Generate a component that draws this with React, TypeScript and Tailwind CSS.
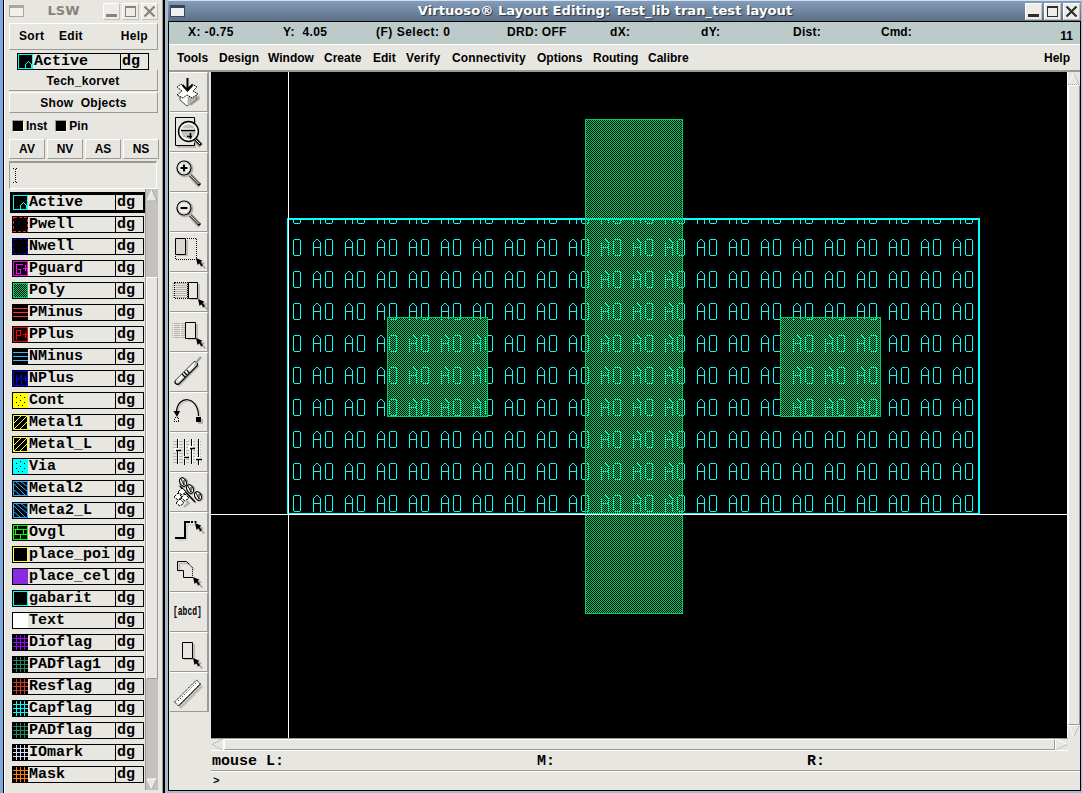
import React from "react";

type Layer = { name: string; kind: string; color: string };

const layers: Layer[] = [
  { name: "Active", kind: "active", color: "#00ffff" },
  { name: "Pwell", kind: "dash", color: "#ff2020" },
  { name: "Nwell", kind: "dash", color: "#0000ff" },
  { name: "Pguard", kind: "guard", color: "#ff00ff" },
  { name: "Poly", kind: "check", color: "#00cc66" },
  { name: "PMinus", kind: "lines", color: "#ff3030" },
  { name: "PPlus", kind: "pplus", color: "#ff0000" },
  { name: "NMinus", kind: "lines", color: "#33bbff" },
  { name: "NPlus", kind: "nplus", color: "#0000ff" },
  { name: "Cont", kind: "dots", color: "#ffff00" },
  { name: "Metal1", kind: "up", color: "#ffff33" },
  { name: "Metal_L", kind: "up", color: "#ffff33" },
  { name: "Via", kind: "dots", color: "#00ffff" },
  { name: "Metal2", kind: "down", color: "#33aaff" },
  { name: "Meta2_L", kind: "down", color: "#33aaff" },
  { name: "Ovgl", kind: "brick", color: "#00ff00" },
  { name: "place_poi", kind: "frame", color: "#ffff33" },
  { name: "place_cel", kind: "solid", color: "#8a2be2" },
  { name: "gabarit", kind: "frame", color: "#00ffff" },
  { name: "Text", kind: "solid", color: "#ffffff" },
  { name: "Dioflag", kind: "grid", color: "#9900ff" },
  { name: "PADflag1", kind: "grid", color: "#228866" },
  { name: "Resflag", kind: "grid", color: "#cc3c22" },
  { name: "Capflag", kind: "grid", color: "#00ffff" },
  { name: "PADflag", kind: "grid", color: "#228866" },
  { name: "IOmark", kind: "grid", color: "#d8dcff" },
  { name: "Mask", kind: "grid", color: "#ff8000" },
];

const frame = "M.5 .5H14.5V14.5H.5Z";
const swatchPaths: Record<string, string> = {
  active: frame + "M7.5 15V10.5L9.5 8.5L10.5 7.5L13.5 10.5V15",
  guard: frame + "M9.5 3.5H3.5V12.5H7.5V8.5H5M12.5 4V10M10 7.5H15",
  lines: "M0 3.5H15M0 7.5H15M0 11.5H15",
  pplus: frame + "M3.5 13V3.5H7.5V8.5H3.5M12.5 5V11M10 7.5H15",
  nplus: frame + "M3.5 14V4M3.5 11L8.5 4V13M12.5 5V11M10 7.5H15",
  up: frame + "M0 9L9 0M1 14L14 1M6 15L15 6",
  down: frame + "M0 2L13 15M2 0L15 11M7 0L15 6M0 8L8 15",
  brick: frame + "M0 4.5H15M0 9.5H15M4.5 0V4M10.5 5V9M2.5 5V9M7.5 10V15",
  frame,
  grid: "M3.5 0V15M7.5 0V15M11.5 0V15M0 3.5H15M0 7.5H15M0 11.5H15",
};

function Swatch({ kind, color }: { kind: string; color: string }) {
  const filled = kind === "dots" || kind === "solid";
  return (
    <svg className="block shrink-0" width="15" height="15" viewBox="0 0 15 15" shapeRendering="crispEdges">
      <rect width="15" height="15" fill={filled ? color : "#000"} />
      {kind === "dots" && (
        <path d="M3 4.500h1M11 4.500h1M7 7.500h1M3 9.500h1M11 9.500h1M5 12.500h1M9 12.500h1M7 2.500h1" stroke="#000" />
      )}
      {kind === "dash" && <path d={frame} fill="none" stroke={color} strokeDasharray="3 2" />}
      {kind === "check" && (
        <>
          <rect width="15" height="15" fill="url(#polySwatch)" />
          <path d={frame} fill="none" stroke={color} />
        </>
      )}
      {swatchPaths[kind] && (
        <path
          d={swatchPaths[kind]}
          fill="none"
          stroke={color}
          shapeRendering={kind === "up" || kind === "down" ? "auto" : "crispEdges"}
        />
      )}
    </svg>
  );
}

function LayerRow({ layer, selected }: { layer: Layer; selected?: boolean }) {
  return (
    <div
      className={
        "flex h-[17px] w-[132px] shrink-0 border border-black text-[15px] leading-[15px] font-bold text-black " +
        (selected ? "outline-2 outline-black" : "")
      }
      style={{ fontFamily: '"Liberation Mono", monospace' }}
    >
      <Swatch kind={layer.kind} color={layer.color} />
      <span className="w-[87px] overflow-hidden pl-[1px] whitespace-pre">{layer.name}</span>
      <span className="flex-1 border-l border-black pl-[1px]">dg</span>
    </div>
  );
}

function Cursor({ x, y }: { x: number; y: number }) {
  return (
    <g transform={`translate(${x} ${y})`}>
      <path d="M2 2L9 5L7 6.5L10 10L8.500 11L6 8L4.500 9.500Z" fill="#aaa89f" />
      <path d="M0 0L6.500 2.800L4.500 4L7 7.200L5.500 8.300L3.300 5.300L1.500 7Z" fill="#000" />
    </g>
  );
}

function Lens({ sign }: { sign: string }) {
  return (
    <>
      <path d="M19 24L29 35" stroke="#b5b3ac" strokeWidth="2.500" />
      <path d="M18.500 21L30 33" stroke="#000" strokeWidth="3" />
      <path d="M19.500 20.500L30 31.500" stroke="#8c8a84" strokeWidth="1.200" />
      <path d="M18.500 21.500L28.500 32" stroke="#fff" />
      <circle cx="15" cy="17" r="7.500" fill="none" stroke="#b5b3ac" strokeWidth="2" />
      <circle cx="14" cy="16" r="7" fill="#f4f3ef" stroke="#000" strokeWidth="1.200" />
      <circle cx="14" cy="16" r="5.500" fill="none" stroke="#d0cec8" />
      <path d={sign} stroke="#000" strokeWidth="2.200" />
    </>
  );
}

const stripes = "M0 11.5H17M0 13.5H17M0 15.5H17M0 17.5H17M0 19.5H17M0 21.5H17M0 23.5H17M0 25.5H17";

const icons: React.ReactNode[] = [
  <>
    <path d="M20 32L29 23L30 27L21 34Z" fill="#aaa89f" />
    <path d="M10 22L17 18L26 22V28L17 34L10 28Z" fill="#fff" stroke="#000" strokeWidth=".7" />
    <path d="M17.500 25V34L26 28V22Z" fill="#b5b3ac" />
    <path d="M17 17L11 12L7 15L12 19L7 23L13 26L17 23L22 26L28 22L23 19L27 15L22 12Z" fill="#fff" stroke="#000" strokeDasharray="1.500 .7" />
    <path d="M17.500 6V19M12.500 13L17.500 18.500L22.500 13" fill="none" stroke="#000" strokeWidth="2" />
  </>,
  <>
    <path d="M7 7H26V36H7Z" fill="#bdbbb4" />
    <path d="M5.500 5.500H24.500V33.500H5.500Z" fill="#e8e6e1" stroke="#000" />
    <path d="M25 27L31 34" stroke="#aaa89f" strokeWidth="5" />
    <path d="M24 26L31 33" stroke="#000" strokeWidth="3" />
    <path d="M24 26L30 32" stroke="#fff" />
    <circle cx="18.500" cy="19.500" r="10" fill="#c4c2bb" stroke="#000" strokeWidth="1.300" />
    <circle cx="18.500" cy="19.500" r="8" fill="none" stroke="#fff" strokeWidth="1.500" />
    <path d="M11 18.500H25" stroke="#000" strokeWidth="1.500" />
    <path d="M12 17H24" stroke="#fff" />
    <path d="M20.500 21V27M17 24.500H22" stroke="#000" strokeWidth="1.500" />
  </>,
  <Lens sign="M10.500 16H17.500M14 12.500V19.500" />,
  <Lens sign="M10.500 16H17.500" />,
  <>
    <path d="M7 8H18V24H7Z" fill="#bdbbb4" />
    <path d="M5.500 6.500H15.500V22.500H5.500Z" fill="#d9d7d0" stroke="#000" />
    <path d="M17 6.500H26.500V27.500H5.500V24" fill="none" stroke="#000" strokeDasharray="1 1" shapeRendering="crispEdges" />
    <Cursor x={26} y={26} />
  </>,
  <>
    <path d={stripes} transform="translate(2 0)" stroke="#b5b3ac" shapeRendering="crispEdges" />
    <path d="M4.500 10.500H17V26.500H4.500Z" fill="none" stroke="#000" strokeDasharray="1 1" shapeRendering="crispEdges" />
    <path d="M20 12H30V28H20Z" fill="#bdbbb4" />
    <path d="M18.500 10.500H27.500V26.500H18.500Z" fill="#e8e6e1" stroke="#000" />
    <Cursor x={28} y={27} />
  </>,
  <>
    <path d={stripes} transform="translate(2 0)" stroke="#b5b3ac" strokeDasharray="1 1 5 0" shapeRendering="crispEdges" />
    <path d="M18 12H28V28H18Z" fill="#bdbbb4" />
    <path d="M15.500 10.500H25.500V26.500H15.500Z" fill="#e8e6e1" stroke="#000" />
    <Cursor x={26} y={26} />
  </>,
  <>
    <path d="M8 33L28 13" stroke="#b5b3ac" strokeWidth="4" />
    <path d="M7.500 30L25 12.500" stroke="#000" strokeWidth="6" strokeLinecap="round" />
    <path d="M7.500 29.500L25 12" stroke="#e4e2dc" strokeWidth="4" strokeLinecap="round" />
    <path d="M24 13L31 5" stroke="#999" strokeWidth="2" />
    <path d="M8 28L25 11" stroke="#fff" strokeWidth="1.500" />
    <path d="M12 22L15 25M14 20L17 23M17 18L19 21" stroke="#000" strokeWidth="1.300" />
  </>,
  <>
    <path d="M8 20C8 5 30 5 30 25" fill="none" stroke="#c6c4bd" strokeWidth="1.500" />
    <path d="M6.500 20C7 3 28 3 28.500 24" fill="none" stroke="#000" strokeWidth="1.200" />
    <path d="M3.500 19H10L7 25Z" fill="#000" />
    <path d="M28 27H33V32H28Z" fill="#b5b3ac" />
    <path d="M26 25H31V30H26Z" fill="#000" />
    <path d="M4.500 25.500H8.500V29.500H4.500Z" fill="none" stroke="#000" strokeDasharray="1 1" shapeRendering="crispEdges" />
  </>,
  <>
    <path d="M3 9.500H32M3 12.500H32M3 15.500H32M3 18.500H32M3 21.500H32M3 24.500H32M3 27.500H32M3 30.500H32" stroke="#b5b3ac" strokeDasharray="4 2" />
    <path d="M8.500 7V32M15.500 8V33M22.500 7V32M29.500 8V33" stroke="#fff" />
    <path d="M7.500 7V32M14.500 7V33M21.500 7V32M28.500 7V33" stroke="#000" />
    <path d="M4 16H9V19H4ZM13 24H18V27H13ZM18 14H23V17H18ZM25 25H30V28H25Z" fill="#fff" />
    <path d="M6 18.500H11M14 25.500H19M20 16.500H25M26 27.500H32" stroke="#000" strokeWidth="1.500" />
  </>,
  <>
    <path d="M9 13L26 31" stroke="#aaa89f" strokeWidth="2" />
    <path d="M10 14L25 30" stroke="#000" strokeWidth="1.200" />
    {[[13, 10], [20, 17], [28, 24]].map(([x, y]) => (
      <g key={x}>
        <ellipse cx={x + 1.5} cy={y + 1} rx="4" ry="5" fill="#aaa89f" />
        <ellipse cx={x} cy={y} rx="3.200" ry="4.500" fill="#fff" stroke="#000" strokeWidth="1.200" transform={`rotate(-25 ${x} ${y})`} />
        <path d={`M${x - 2} ${y - 3}L${x + 1} ${y + 3}V${y - 2}`} stroke="#000" fill="none" />
      </g>
    ))}
    {[[12, 20], [8, 25], [15, 26], [10, 31]].map(([x, y]) => (
      <path key={x} d={`M${x - 4} ${y}L${x} ${y - 4}L${x + 4} ${y}L${x} ${y + 3}Z`} fill="#fff" stroke="#000" strokeDasharray="3 1" />
    ))}
    <path d="M16 29L19 31L14 35" stroke="#aaa89f" strokeWidth="2" fill="none" />
  </>,
  <>
    <path d="M7 28H17V13H26" fill="none" stroke="#c6c4bd" />
    <path d="M5 26H15V10H20" fill="none" stroke="#000" strokeWidth="2" />
    <path d="M21 10H27" stroke="#000" strokeWidth="2" strokeDasharray="2 1.500" />
    <Cursor x={25} y={11} />
  </>,
  <>
    <path d="M9.500 20V11.500H18L24.500 18" fill="none" stroke="#bdbbb4" strokeWidth="1.500" />
    <path d="M23 25.500H13.500V18.500H7.500V9.500H16.500L19 12" fill="none" stroke="#000" />
    <path d="M18 11L22.500 15.500V25" fill="none" stroke="#000" strokeDasharray="1 1" />
    <Cursor x={23} y={25} />
  </>,
  <text transform="translate(3 23) scale(1 1.65)" fontSize="8" fontFamily="'Liberation Mono', monospace" fontWeight="700" fill="#000">
    [abcd]
  </text>,
  <>
    <path d="M14 12H25V28H14Z" fill="#bdbbb4" />
    <path d="M12.500 10.500H22.500V26.500H12.500Z" fill="#e8e6e1" stroke="#000" />
    <Cursor x={23} y={26} />
  </>,
  <>
    <path d="M10 36L32 14" stroke="#bdbbb4" strokeWidth="3" />
    <path d="M4.500 30L26.500 8L30.500 12L8.500 34Z" fill="#fff" stroke="#000" strokeDasharray="1.500 .7" />
    <path d="M8 29L27 10" stroke="#000" strokeDasharray="1 2" />
    <path d="M8.500 34L30.500 12" stroke="#000" />
  </>,
];

function WinButton({ kind, dim }: { kind: "min" | "max" | "close"; dim?: boolean }) {
  const color = dim ? "#85837c" : "#2e2e2a";
  return (
    <svg width="17" height="17" viewBox="0 0 15 15" className="block shrink-0 border border-t-white border-r-[#c2c0b8] border-b-[#c2c0b8] border-l-white bg-[#eeece6]">
      {kind === "min" && <path d="M2 11.500H13" stroke={color} strokeWidth="3" />}
      {kind === "max" && (
        <g fill="none" stroke={color} shapeRendering="crispEdges">
          <path d="M2.500 2.500H12.500V12.500H2.500Z" />
          <path d="M2 3H13" strokeWidth="2" />
        </g>
      )}
      {kind === "close" && <path d="M2.500 2.500L12.500 12.500M12.500 2.500L2.500 12.500" stroke={color} strokeWidth="2.200" />}
    </svg>
  );
}

function SystemIcon({ dim }: { dim?: boolean }) {
  return (
    <div
      className={
        "h-[12px] w-[15px] shrink-0 border border-t-[3px] " +
        (dim ? "border-[#a8a69e] bg-[#f2f0eb]" : "border-[#34475c] bg-[#f0f0ee]")
      }
    />
  );
}

const raised = "border border-t-white border-l-white border-r-[#9c9a94] border-b-[#9c9a94]";

function LayerWindow() {
  return (
    <section className="flex w-[157px] shrink-0 flex-col bg-[#e8e6e1] tracking-[0.3px]">
      <header className="flex h-[23px] shrink-0 items-center pb-px pl-[4px]">
        <SystemIcon dim />
        <h1
          className="w-[79px] text-center text-[13px] font-bold tracking-normal text-[#85837c]"
          style={{ fontFamily: '"DejaVu Sans", sans-serif' }}
        >
          LSW
        </h1>
        <div className="flex gap-[2px]">
          <WinButton kind="min" dim />
          <WinButton kind="max" dim />
          <WinButton kind="close" dim />
        </div>
      </header>
      <nav className={"ml-[4px] flex h-[27px] w-[149px] shrink-0 items-center pr-[9px] pb-[2px] pl-[9px] " + raised}>
        <span className="w-[40px]">Sort</span>
        <span className="flex-1">Edit</span>
        <span>Help</span>
      </nav>
      <div className="mt-[3px] pl-[12px] tracking-normal">
        <LayerRow layer={layers[0]} />
      </div>
      <div className="ml-[4px] h-[21px] w-[149px] shrink-0 border-r border-b border-[#9c9a94] text-center leading-[22px]">
        Tech_korvet
      </div>
      <div className={"mt-[1px] ml-[4px] h-[21px] w-[149px] shrink-0 text-center leading-[20px] " + raised}>Show&nbsp; Objects</div>
      <div className="flex h-[26px] shrink-0 items-center gap-[2px] pl-[7px]">
        <span className="size-[12px] border border-[#9c9a94] border-r-white border-b-white bg-black" />
        <span className="mr-[6px] tracking-normal">Inst</span>
        <span className="size-[12px] border border-[#9c9a94] border-r-white border-b-white bg-black" />
        <span className="tracking-normal">Pin</span>
      </div>
      <div className="flex h-[20px] shrink-0 gap-[2px] pl-[4px] tracking-normal">
        {["AV", "NV", "AS", "NS"].map((label) => (
          <button key={label} className={"w-[36px] text-center leading-[17px] " + raised}>
            {label}
          </button>
        ))}
      </div>
      <div className="mt-[2px] ml-[4px] flex h-[28px] w-[148px] shrink-0 items-center border border-t-2 border-[#9c9a94] border-r-white border-b-white pl-[3px]">
        <svg width="5" height="15" viewBox="0 0 5 15" shapeRendering="crispEdges">
          <path d="M0 .5H2M3 .5H5M2.500 1V14M0 14.500H2M3 14.500H5" stroke="#000" strokeDasharray="1 1" />
        </svg>
      </div>
      <div className="flex min-h-0 flex-1 tracking-normal">
        <div className="flex w-[140px] flex-col gap-[5px] pt-[5px] pl-[7px]">
          {layers.map((layer, i) => (
            <LayerRow key={layer.name} layer={layer} selected={i === 0} />
          ))}
        </div>
        <div className="flex h-[601px] w-[13px] flex-col border-l border-[#9c9a94] bg-[#c4c2be]">
          <svg width="12" height="13" viewBox="0 0 12 13">
            <path d="M6 1L11 12H1Z" fill="#e8e6e1" stroke="#fff" />
            <path d="M1 12H11L6 1" fill="none" stroke="#9c9a94" />
          </svg>
          <div className="h-[75px]" />
          <div className={"h-[402px] bg-[#e8e6e1] " + raised} />
          <div className="h-[99px]" />
          <svg width="12" height="12" viewBox="0 0 12 12">
            <path d="M1 1H11L6 11Z" fill="#e8e6e1" stroke="#fff" />
            <path d="M11 1L6 11" fill="none" stroke="#9c9a94" />
          </svg>
        </div>
      </div>
    </section>
  );
}

function Drawing() {
  return (
    <svg className="block shrink-0 bg-black" width="856" height="666" viewBox="211 72 856 666" shapeRendering="crispEdges">
      <defs>
        <pattern id="polyFill" x="0" y="0" width="2" height="2" patternUnits="userSpaceOnUse">
          <path d="M1 0h1v1h-1zM0 1h1v1h-1z" fill="#00cc66" />
        </pattern>
        <pattern id="polySwatch" x="0" y="0" width="2" height="2" patternUnits="userSpaceOnUse">
          <path d="M0 0h1v1h-1zM1 1h1v1h-1z" fill="#00cc66" />
        </pattern>
        <pattern id="activeFill" x="304" y="224" width="32" height="32" patternUnits="userSpaceOnUse">
          <path
            fill="#00ffff"
            d="M12 15h2v1h-2zM11 16h1v1h-1zM14 16h1v1h-1zM10 17h1v1h-1zM15 17h1v1h-1zM9 18h1v14h-1zM16 18h1v14h-1zM10 23h6v1h-6zM22 15h6v1h-6zM21 16h1v15h-1zM28 16h1v15h-1zM22 31h6v1h-6z"
          />
        </pattern>
      </defs>
      <path d="M288 218H978V514H288Z" fill="url(#activeFill)" />
      <path d="M287 218H980V220H287ZM978 218H980V514H978ZM287 218H288V514H287ZM287 513H980V514H287Z" fill="#00ffff" />
      {[
        [585, 119, 98, 495],
        [387, 317, 101, 100],
        [780, 317, 101, 100],
      ].map(([x, y, w, h]) => (
        <g key={x}>
          <rect x={x} y={y} width={w} height={h} fill="url(#polyFill)" />
          <rect x={x + 0.5} y={y + 0.5} width={w - 1} height={h - 1} fill="none" stroke="#00cc66" />
        </g>
      ))}
      <path d="M288 72H289V738H288ZM211 514H1067V515H211Z" fill="#fff" />
    </svg>
  );
}

function LayoutWindow() {
  return (
    <section className="flex min-w-0 flex-1 flex-col">
      <header className="flex h-[22px] shrink-0 items-center border-t border-b border-t-[#d5dfeb] border-b-black bg-linear-to-b from-[#829dbb] to-[#5c7087] pr-[1px] pl-[2px]">
        <SystemIcon />
        <h1
          className="flex-1 text-center leading-[20px] font-bold text-white [text-shadow:1px_1px_1px_#26313e]"
          style={{ fontFamily: '"DejaVu Sans", sans-serif' }}
        >
          <span className="inline-block w-[376px] text-[13.150px] whitespace-nowrap">Virtuoso® Layout Editing: Test_lib tran_test layout</span>
        </h1>
        <div className="flex gap-[2px]">
          <WinButton kind="min" />
          <WinButton kind="max" />
          <WinButton kind="close" />
        </div>
      </header>
      <div className="flex min-h-0 flex-1 flex-col border-r border-b border-l border-black bg-[#e8e6e1]">
        <div className="flex h-[22px] shrink-0 bg-[#bccaca] pr-[7px] pl-[19px] leading-[20px] whitespace-pre">
          <span className="w-[95px] tracking-[0.4px]">X: -0.75</span>
          <span className="w-[93px] tracking-[0.4px]">Y:  4.05</span>
          <span className="w-[131px] tracking-[0.5px]">(F) Select: 0</span>
          <span className="w-[103px] tracking-[0.3px]">DRD: OFF</span>
          <span className="w-[91px] tracking-[0.3px]">dX:</span>
          <span className="w-[92px] tracking-[0.3px]">dY:</span>
          <span className="w-[88px] tracking-[0.3px]">Dist:</span>
          <span className="flex-1">Cmd:</span>
          <span className="pt-[4px]">11</span>
        </div>
        <nav className="flex h-[28px] shrink-0 border-t border-b-2 border-t-white border-b-[#9c9a94] pr-[10px] pl-[8px] leading-[26px]">
          <span className="w-[42px]">Tools</span>
          <span className="w-[49px]">Design</span>
          <span className="w-[56px]">Window</span>
          <span className="w-[49px]">Create</span>
          <span className="w-[33px]">Edit</span>
          <span className="w-[46px] tracking-[0.3px]">Verify</span>
          <span className="w-[85px] tracking-[0.15px]">Connectivity</span>
          <span className="w-[56px]">Options</span>
          <span className="w-[55px]">Routing</span>
          <span className="flex-1">Calibre</span>
          <span>Help</span>
        </nav>
        <div className="flex min-h-0 flex-1">
          <aside className="flex w-[42px] shrink-0 flex-col pl-px">
            {icons.map((icon, i) => (
              <button key={i} className="block h-[40px] w-[39px] shrink-0 border-t border-r-2 border-b border-t-white border-r-[#9c9a94] border-b-[#9c9a94]">
                <svg className="-mt-px block" width="37" height="39" viewBox="0 0 37 39">
                  {icon}
                </svg>
              </button>
            ))}
          </aside>
          <div className="flex min-w-0 flex-1 flex-col">
            <div className="flex h-[666px]">
              <Drawing />
              <div className="flex w-[13px] flex-col border-l border-white">
                <svg width="12" height="13" viewBox="0 0 12 13" fill="none">
                  <path d="M0 12.500H12M6 1L11 12" stroke="#9c9a94" strokeDasharray="1 1" />
                  <path d="M6 1L1 12" stroke="#fff" strokeDasharray="2 1" />
                </svg>
                <div className={"min-h-0 flex-1 " + raised} />
                <svg width="12" height="13" viewBox="0 0 12 13" fill="none">
                  <path d="M1 1L6 12M0 .5H12" stroke="#fff" strokeDasharray="2 1" />
                  <path d="M11 1L6 12" stroke="#9c9a94" strokeDasharray="1 1" />
                </svg>
              </div>
            </div>
            <div className="flex h-[13px] w-[857px] shrink-0 border-t border-b border-t-[#9c9a94] border-b-white">
              <svg width="13" height="11" viewBox="0 0 13 11" fill="none">
                <path d="M12 0L1 5.500L12 11" stroke="#9c9a94" strokeDasharray="1 1" />
                <path d="M12.500 0V11" stroke="#fff" />
              </svg>
              <div className={"flex-1 " + raised} />
              <svg width="13" height="11" viewBox="0 0 13 11" fill="none">
                <path d="M.5 0V11M1 0L12 5.500" stroke="#fff" />
                <path d="M12 5.500L1 11" stroke="#9c9a94" strokeDasharray="1 1" />
              </svg>
            </div>
            <div
              className="flex h-[20px] shrink-0 border-b border-[#9c9a94] pl-[1px] text-[15px] leading-[21px]"
              style={{ fontFamily: '"Liberation Mono", monospace' }}
            >
              <span className="w-[325px]">mouse L:</span>
              <span className="w-[270px]">M:</span>
              <span>R:</span>
            </div>
            <div className="flex-1 border-t border-white pl-[2px] text-[11px] leading-[19px]" style={{ fontFamily: '"Liberation Mono", monospace' }}>
              &gt;
            </div>
          </div>
        </div>
      </div>
    </section>
  );
}

export default function App() {
  return (
    <main
      className="flex h-[793px] w-[1082px] overflow-hidden bg-[#a9bac9] text-[12px] font-bold text-black"
      style={{ fontFamily: '"Liberation Sans", sans-serif' }}
    >
      <div className="w-[5px] shrink-0 border-r border-white bg-[#7fa9dc]">
        <div className="ml-auto h-full w-px bg-black" />
      </div>
      <LayerWindow />
      <div className="w-[3px] shrink-0 border-r-2 border-l border-r-black border-l-[#9c9a94]" />
      <div className="w-[3px] shrink-0 bg-[#a9bac9]" />
      <div className="flex min-w-0 flex-1 pr-px pb-[2px]">
        <LayoutWindow />
      </div>
    </main>
  );
}
